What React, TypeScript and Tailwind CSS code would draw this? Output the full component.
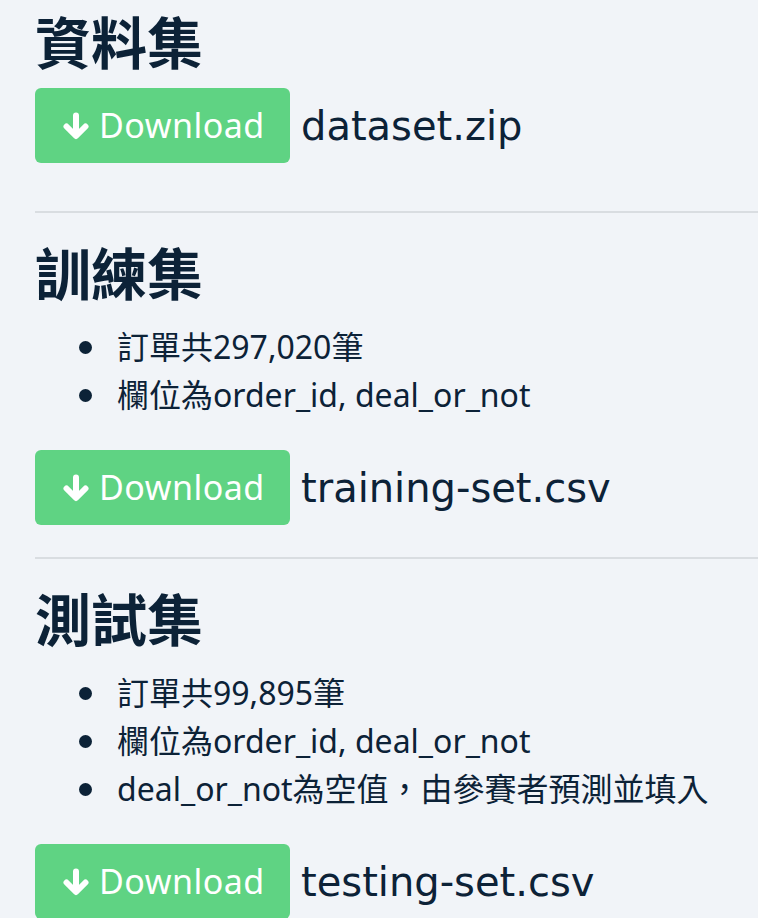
const ink = "text-[#0c2237]";

function ArrowDown() {
  return (
    <svg viewBox="0 0 26 28" className="h-[28px] w-[26px] shrink-0" aria-hidden>
      <path
        d="M13 3.5V23M3.5 14.5L13 24l9.5-9.5"
        fill="none"
        stroke="white"
        strokeWidth="6"
        strokeLinecap="round"
        strokeLinejoin="round"
      />
    </svg>
  );
}

function DownloadRow({ file }: { file: string }) {
  return (
    <div className="flex items-center">
      <a
        href="#"
        className="flex h-[75px] w-[255px] shrink-0 items-center gap-[10px] rounded-[6px] bg-[#5fd383] pl-[28px] text-[34px] tracking-[0.5px] text-white"
        style={{ fontFamily: '"Noto Sans", sans-serif' }}
      >
        <ArrowDown />
        <span>Download</span>
      </a>
      <span
        className={`ml-[11px] text-[40px] ${ink}`}
        style={{ fontFamily: '"DejaVu Sans", "Noto Sans", sans-serif' }}
      >
        {file}
      </span>
    </div>
  );
}

function Heading({ children }: { children: string }) {
  return (
    <h2 className={`text-[56px] font-bold leading-[62px] ${ink}`}>
      {children}
    </h2>
  );
}

function Bullets({ items }: { items: string[] }) {
  return (
    <ul
      className="mt-[21px] pl-[44px]"
      style={{ fontFamily: '"Noto Sans", "Noto Sans CJK TC", sans-serif' }}
    >
      {items.map((item) => (
        <li
          key={item}
          className={`flex items-center text-[32px] leading-[48px] ${ink}`}
        >
          <span
            className="mr-[25px] size-[13px] shrink-0 rounded-full bg-[#0c2237]"
            aria-hidden
          />
          {item}
        </li>
      ))}
    </ul>
  );
}

export default function App() {
  return (
    <div
      className="min-h-[918px] overflow-hidden bg-[#f1f4f8] pl-[35px] pt-[9px]"
      style={{ fontFamily: '"Noto Sans CJK TC", sans-serif' }}
    >
      <section className="pb-[48px]">
        <Heading>資料集</Heading>
        <div className="mt-[17px]">
          <DownloadRow file="dataset.zip" />
        </div>
      </section>

      <section className="border-t-2 border-[#d9dde1] pb-[32px] pt-[27px]">
        <Heading>訓練集</Heading>
        <Bullets items={["訂單共297,020筆", "欄位為order_id, deal_or_not"]} />
        <div className="mt-[31px]">
          <DownloadRow file="training-set.csv" />
        </div>
      </section>

      <section className="border-t-2 border-[#d9dde1] pt-[27px]">
        <Heading>測試集</Heading>
        <Bullets
          items={[
            "訂單共99,895筆",
            "欄位為order_id, deal_or_not",
            "deal_or_not為空值，由參賽者預測並填入",
          ]}
        />
        <div className="mt-[31px]">
          <DownloadRow file="testing-set.csv" />
        </div>
      </section>
    </div>
  );
}
